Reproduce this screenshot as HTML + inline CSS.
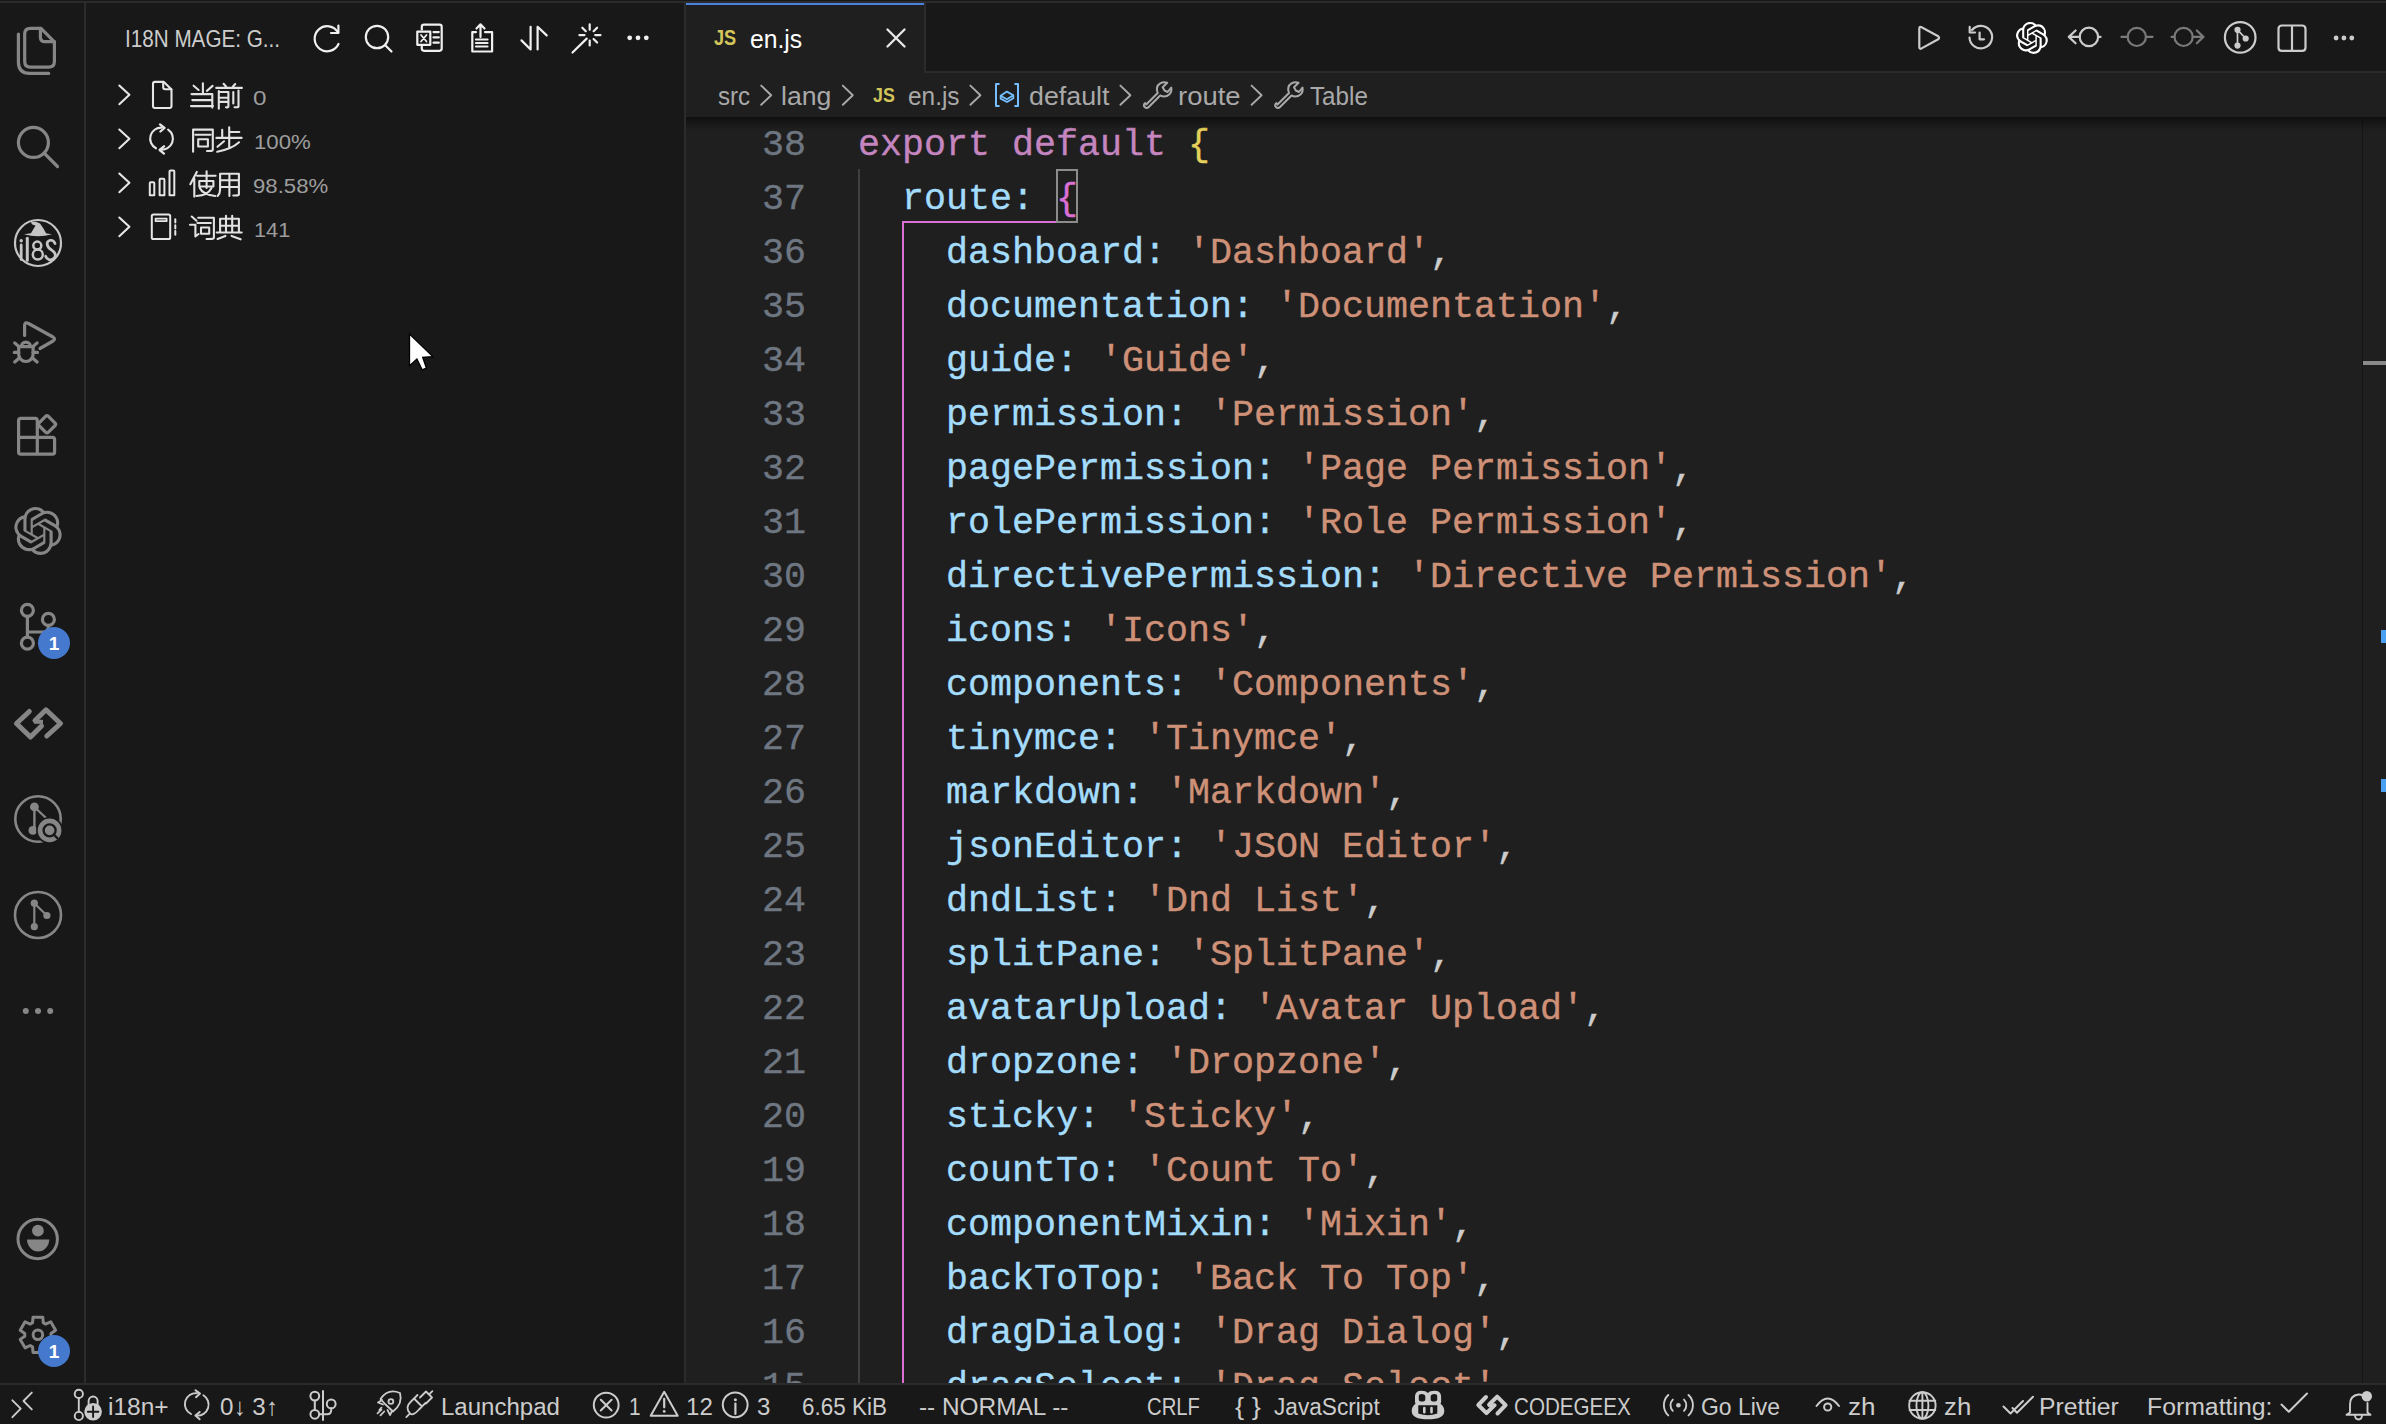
<!DOCTYPE html>
<html><head><meta charset="utf-8"><style>
*{margin:0;padding:0;box-sizing:border-box}
html,body{width:2386px;height:1424px;overflow:hidden;background:#181818;font-family:"Liberation Sans",sans-serif;color:#cccccc}
.a{position:absolute}
.t{position:absolute;line-height:0;white-space:pre;transform-origin:0 0;font-family:"Liberation Sans",sans-serif}
.code{position:absolute;font-family:"Liberation Mono",monospace;font-size:36.67px;line-height:54px;height:54px;white-space:pre;-webkit-text-stroke:0.35px currentColor}
.ln{left:0;width:120px;text-align:right;color:#6e7681}
.cl{left:172px;color:#cccccc}
.k{color:#a4dcfc}.s{color:#ce9178}.kw{color:#c586c0}.b1{color:#e4d05a}.b2{color:#da70d6}.p{color:#cccccc}
</style></head><body>

<div class="a" style="left:0;top:1px;width:2386px;height:2px;background:#2b2b2b"></div>
<div class="a" style="left:84px;top:3px;width:2px;height:1380px;background:#2b2b2b"></div>
<div class="a" style="left:684px;top:3px;width:2px;height:1380px;background:#2b2b2b"></div>
<div class="a" style="left:926px;top:71px;width:1460px;height:2px;background:#2b2b2b"></div>
<div class="a" style="left:686px;top:3px;width:238px;height:70px;background:#1f1f1f"></div>
<div class="a" style="left:686px;top:3px;width:238px;height:2px;background:#4a82de"></div>
<div class="a" style="left:924px;top:3px;width:2px;height:70px;background:#2b2b2b"></div>
<div class="a" style="left:686px;top:73px;width:1700px;height:44px;background:#1f1f1f"></div>

<div class="a" style="left:686px;top:117px;width:1676px;height:1266px;background:#1f1f1f;overflow:hidden">
<div class="a" style="left:172px;top:52px;width:2px;height:1300px;background:#404040"></div>
<div class="a" style="left:216px;top:104px;width:2px;height:1300px;background:#da70d6"></div>
<div class="a" style="left:216px;top:104px;width:154px;height:2px;background:#da70d6"></div>
<div class="a" style="left:370px;top:52px;width:22px;height:54px;border:2px solid #8c8c8c"></div>
<div class="code ln" style="top:1px">38</div>
<div class="code cl" style="top:1px"><span class="kw">export default </span><span class="b1">{</span></div>
<div class="code ln" style="top:55px">37</div>
<div class="code cl" style="top:55px"><span class="p">  </span><span class="k">route:</span><span class="p"> </span><span class="b2">{</span></div>
<div class="code ln" style="top:109px">36</div>
<div class="code cl" style="top:109px"><span class="p">    </span><span class="k">dashboard:</span><span class="p"> </span><span class="s">'Dashboard'</span><span class="p">,</span></div>
<div class="code ln" style="top:163px">35</div>
<div class="code cl" style="top:163px"><span class="p">    </span><span class="k">documentation:</span><span class="p"> </span><span class="s">'Documentation'</span><span class="p">,</span></div>
<div class="code ln" style="top:217px">34</div>
<div class="code cl" style="top:217px"><span class="p">    </span><span class="k">guide:</span><span class="p"> </span><span class="s">'Guide'</span><span class="p">,</span></div>
<div class="code ln" style="top:271px">33</div>
<div class="code cl" style="top:271px"><span class="p">    </span><span class="k">permission:</span><span class="p"> </span><span class="s">'Permission'</span><span class="p">,</span></div>
<div class="code ln" style="top:325px">32</div>
<div class="code cl" style="top:325px"><span class="p">    </span><span class="k">pagePermission:</span><span class="p"> </span><span class="s">'Page Permission'</span><span class="p">,</span></div>
<div class="code ln" style="top:379px">31</div>
<div class="code cl" style="top:379px"><span class="p">    </span><span class="k">rolePermission:</span><span class="p"> </span><span class="s">'Role Permission'</span><span class="p">,</span></div>
<div class="code ln" style="top:433px">30</div>
<div class="code cl" style="top:433px"><span class="p">    </span><span class="k">directivePermission:</span><span class="p"> </span><span class="s">'Directive Permission'</span><span class="p">,</span></div>
<div class="code ln" style="top:487px">29</div>
<div class="code cl" style="top:487px"><span class="p">    </span><span class="k">icons:</span><span class="p"> </span><span class="s">'Icons'</span><span class="p">,</span></div>
<div class="code ln" style="top:541px">28</div>
<div class="code cl" style="top:541px"><span class="p">    </span><span class="k">components:</span><span class="p"> </span><span class="s">'Components'</span><span class="p">,</span></div>
<div class="code ln" style="top:595px">27</div>
<div class="code cl" style="top:595px"><span class="p">    </span><span class="k">tinymce:</span><span class="p"> </span><span class="s">'Tinymce'</span><span class="p">,</span></div>
<div class="code ln" style="top:649px">26</div>
<div class="code cl" style="top:649px"><span class="p">    </span><span class="k">markdown:</span><span class="p"> </span><span class="s">'Markdown'</span><span class="p">,</span></div>
<div class="code ln" style="top:703px">25</div>
<div class="code cl" style="top:703px"><span class="p">    </span><span class="k">jsonEditor:</span><span class="p"> </span><span class="s">'JSON Editor'</span><span class="p">,</span></div>
<div class="code ln" style="top:757px">24</div>
<div class="code cl" style="top:757px"><span class="p">    </span><span class="k">dndList:</span><span class="p"> </span><span class="s">'Dnd List'</span><span class="p">,</span></div>
<div class="code ln" style="top:811px">23</div>
<div class="code cl" style="top:811px"><span class="p">    </span><span class="k">splitPane:</span><span class="p"> </span><span class="s">'SplitPane'</span><span class="p">,</span></div>
<div class="code ln" style="top:865px">22</div>
<div class="code cl" style="top:865px"><span class="p">    </span><span class="k">avatarUpload:</span><span class="p"> </span><span class="s">'Avatar Upload'</span><span class="p">,</span></div>
<div class="code ln" style="top:919px">21</div>
<div class="code cl" style="top:919px"><span class="p">    </span><span class="k">dropzone:</span><span class="p"> </span><span class="s">'Dropzone'</span><span class="p">,</span></div>
<div class="code ln" style="top:973px">20</div>
<div class="code cl" style="top:973px"><span class="p">    </span><span class="k">sticky:</span><span class="p"> </span><span class="s">'Sticky'</span><span class="p">,</span></div>
<div class="code ln" style="top:1027px">19</div>
<div class="code cl" style="top:1027px"><span class="p">    </span><span class="k">countTo:</span><span class="p"> </span><span class="s">'Count To'</span><span class="p">,</span></div>
<div class="code ln" style="top:1081px">18</div>
<div class="code cl" style="top:1081px"><span class="p">    </span><span class="k">componentMixin:</span><span class="p"> </span><span class="s">'Mixin'</span><span class="p">,</span></div>
<div class="code ln" style="top:1135px">17</div>
<div class="code cl" style="top:1135px"><span class="p">    </span><span class="k">backToTop:</span><span class="p"> </span><span class="s">'Back To Top'</span><span class="p">,</span></div>
<div class="code ln" style="top:1189px">16</div>
<div class="code cl" style="top:1189px"><span class="p">    </span><span class="k">dragDialog:</span><span class="p"> </span><span class="s">'Drag Dialog'</span><span class="p">,</span></div>
<div class="code ln" style="top:1243px">15</div>
<div class="code cl" style="top:1243px"><span class="p">    </span><span class="k">dragSelect:</span><span class="p"> </span><span class="s">'Drag Select'</span><span class="p">,</span></div>
</div>
<div class="a" style="left:2362px;top:117px;width:24px;height:1266px;background:#1f1f1f"></div>
<div class="a" style="left:2362px;top:117px;width:1px;height:1266px;background:#151515"></div>
<div class="a" style="left:2363px;top:361px;width:23px;height:4px;background:#8a8a8a"></div>
<div class="a" style="left:2381px;top:630px;width:5px;height:13px;background:#4aa0f0"></div>
<div class="a" style="left:2381px;top:779px;width:5px;height:13px;background:#4aa0f0"></div>
<div class="a" style="left:686px;top:117px;width:1700px;height:13px;background:linear-gradient(rgba(0,0,0,0.5),rgba(0,0,0,0))"></div>
<div class="a" style="left:0;top:1383px;width:2386px;height:41px;background:#181818;border-top:2px solid #2b2b2b"></div>
<div class="t" style="left:125.29px;top:38.79px;font-size:23.69px;color:#cccccc;transform:scaleX(0.8726);">I18N MAGE: G...</div>
<div class="t" style="left:253.05px;top:97.85px;font-size:20.05px;color:#9d9d9d;transform:scaleX(1.2103);">0</div>
<div class="t" style="left:253.71px;top:141.85px;font-size:20.05px;color:#9d9d9d;transform:scaleX(1.1093);">100%</div>
<div class="t" style="left:252.96px;top:185.75px;font-size:20.05px;color:#9d9d9d;transform:scaleX(1.1078);">98.58%</div>
<div class="t" style="left:253.74px;top:229.75px;font-size:20.35px;color:#9d9d9d;transform:scaleX(1.0698);">141</div>
<div class="t" style="left:714.47px;top:38.20px;font-size:21.95px;color:#d3c55a;transform:scaleX(0.8283);font-weight:bold;">JS</div>
<div class="t" style="left:749.65px;top:38.98px;font-size:25.17px;color:#ffffff;transform:scaleX(0.9825);">en.js</div>
<div class="t" style="left:718.13px;top:95.62px;font-size:26.50px;color:#a9a9a9;transform:scaleX(0.9089);">src</div>
<div class="t" style="left:781.40px;top:95.62px;font-size:26.50px;color:#a9a9a9;transform:scaleX(1.0063);">lang</div>
<div class="t" style="left:907.56px;top:95.62px;font-size:26.50px;color:#a9a9a9;transform:scaleX(0.9204);">en.js</div>
<div class="t" style="left:1028.67px;top:95.62px;font-size:26.50px;color:#a9a9a9;transform:scaleX(1.0121);">default</div>
<div class="t" style="left:1178.18px;top:95.62px;font-size:26.50px;color:#a9a9a9;transform:scaleX(1.0355);">route</div>
<div class="t" style="left:1309.86px;top:95.62px;font-size:26.50px;color:#a9a9a9;transform:scaleX(0.9130);">Table</div>
<div class="t" style="left:872.73px;top:94.75px;font-size:20.35px;color:#d3c55a;transform:scaleX(0.8744);font-weight:bold;">JS</div>
<div class="t" style="left:108.16px;top:1406.54px;font-size:24.42px;color:#cccccc;transform:scaleX(1.0037);">i18n+</div>
<div class="t" style="left:220.35px;top:1406.54px;font-size:24.42px;color:#cccccc;transform:scaleX(0.9914);">0↓ 3↑</div>
<div class="t" style="left:440.63px;top:1406.54px;font-size:24.42px;color:#cccccc;transform:scaleX(0.9840);">Launchpad</div>
<div class="t" style="left:628.91px;top:1406.54px;font-size:24.42px;color:#cccccc;transform:scaleX(0.8548);">1</div>
<div class="t" style="left:686.36px;top:1406.54px;font-size:24.42px;color:#cccccc;transform:scaleX(0.9886);">12</div>
<div class="t" style="left:757.48px;top:1406.54px;font-size:24.42px;color:#cccccc;transform:scaleX(0.9847);">3</div>
<div class="t" style="left:802.46px;top:1406.54px;font-size:24.42px;color:#cccccc;transform:scaleX(0.9200);">6.65 KiB</div>
<div class="t" style="left:919.32px;top:1406.54px;font-size:24.42px;color:#cccccc;transform:scaleX(0.9987);">-- NORMAL --</div>
<div class="t" style="left:1146.57px;top:1406.54px;font-size:24.42px;color:#cccccc;transform:scaleX(0.8302);">CRLF</div>
<div class="t" style="left:1234.55px;top:1406.54px;font-size:24.42px;color:#cccccc;transform:scaleX(1.1192);">{ }</div>
<div class="t" style="left:1274.25px;top:1406.54px;font-size:24.42px;color:#cccccc;transform:scaleX(0.9274);">JavaScript</div>
<div class="t" style="left:1514.35px;top:1406.54px;font-size:24.42px;color:#cccccc;transform:scaleX(0.8445);">CODEGEEX</div>
<div class="t" style="left:1700.95px;top:1406.54px;font-size:24.42px;color:#cccccc;transform:scaleX(0.9396);">Go Live</div>
<div class="t" style="left:1848.24px;top:1406.54px;font-size:24.42px;color:#cccccc;transform:scaleX(1.0683);">zh</div>
<div class="t" style="left:1943.76px;top:1406.54px;font-size:24.42px;color:#cccccc;transform:scaleX(1.0554);">zh</div>
<div class="t" style="left:2038.57px;top:1406.54px;font-size:24.42px;color:#cccccc;transform:scaleX(1.0144);">Prettier</div>
<div class="t" style="left:2147.46px;top:1406.54px;font-size:24.42px;color:#cccccc;transform:scaleX(1.0163);">Formatting:</div>
<svg class="a" style="left:0;top:0" width="2386" height="1424" viewBox="0 0 2386 1424"><path d="M30.4 28.4 H41 L54.4 41.8 V61.5 Q54.4 67.2 48.7 67.2 H30.4 Q24.7 67.2 24.7 61.5 V34.1 Q24.7 28.4 30.4 28.4 Z" fill="none" stroke="#868686" stroke-width="3.2" stroke-linecap="round" stroke-linejoin="round" />
<path d="M40.4 28.4 V37 Q40.4 41.7 45 41.7 H54.4" fill="none" stroke="#868686" stroke-width="3.2" stroke-linecap="round" stroke-linejoin="round" />
<path d="M18.4 34 V62 Q18.4 73.4 29.8 73.4 H48.7" fill="none" stroke="#868686" stroke-width="3.2" stroke-linecap="round" stroke-linejoin="round" />
<circle cx="33.4" cy="142.4" r="15" fill="none" stroke="#868686" stroke-width="3.2"/>
<path d="M44.2 153.2 L57.5 166.5" fill="none" stroke="#868686" stroke-width="3.2" stroke-linecap="round" stroke-linejoin="round" />
<circle cx="38" cy="243" r="23" fill="none" stroke="#c5c5c5" stroke-width="2.2"/>
<path d="M24 234.3 Q38 238.3 52 234.3 Q38 231.3 24 234.3 Z" fill="#c5c5c5" />
<path d="M30.5 234 Q33.5 229 35.5 225.5 Q31.5 225 31 222.3 Q35.5 220.5 40 223.5 Q43.5 228 46.5 234 Z" fill="#c5c5c5" />
<circle cx="21.2" cy="240.8" r="1.7" fill="#c5c5c5"/>
<path d="M21.2 245 V259.5" fill="none" stroke="#c5c5c5" stroke-width="2.8" stroke-linecap="round" stroke-linejoin="round" stroke-linecap="butt"/>
<path d="M27.3 238.3 V260.3" fill="none" stroke="#c5c5c5" stroke-width="3.0" stroke-linecap="round" stroke-linejoin="round" stroke-linecap="butt"/>
<circle cx="37.3" cy="245.6" r="4.0" fill="none" stroke="#c5c5c5" stroke-width="2.5"/>
<circle cx="37.8" cy="254.6" r="5.0" fill="none" stroke="#c5c5c5" stroke-width="2.5"/>
<path d="M55 243.5 Q53.5 239.8 50.2 240.3 Q46.5 241.2 47.3 245 Q48.3 248.3 52 250.3 Q56.3 253 55 257 Q53 260.7 48.8 259.6 Q46.3 258.7 45.6 256.2" fill="none" stroke="#c5c5c5" stroke-width="2.7" stroke-linecap="round" stroke-linejoin="round" />
<path d="M24.6 335.5 V325.5 Q24.6 321.5 28.5 323.5 L53 337 Q56 339 53 341 L40 348.5" fill="none" stroke="#868686" stroke-width="3.2" stroke-linecap="round" stroke-linejoin="round" />
<path d="M21.3 346.7 A4.6 4.6 0 0 1 30.5 346.7 M18.7 346.7 H33.1 V354.2 A7.2 7.3 0 0 1 18.7 354.2 Z" fill="none" stroke="#868686" stroke-width="3.2" stroke-linecap="round" stroke-linejoin="round" />
<path d="M14.7 342.9 L18.5 346.2 M14.3 352.4 H18.7 M14.7 362 L19 358.3 M37.1 342.9 L33.3 346.2 M37.5 352.4 H33.1 M37.1 362 L32.8 358.3" fill="none" stroke="#868686" stroke-width="3.2" stroke-linecap="round" stroke-linejoin="round" />
<path d="M18.6 420.6 Q18.6 418.4 20.8 418.4 H35.1 Q37.3 418.4 37.3 420.6 V437.3 H52.4 Q54.6 437.3 54.6 439.5 V451.9 Q54.6 454.1 52.4 454.1 H20.8 Q18.6 454.1 18.6 451.9 Z M18.6 437.3 H37.3 V454.1" fill="none" stroke="#868686" stroke-width="3.2" stroke-linecap="round" stroke-linejoin="round" />
<path d="M45.8 416.2 Q47 415 48.2 416.2 L55.1 423.1 Q56.3 424.3 55.1 425.5 L48.2 432.4 Q47 433.6 45.8 432.4 L38.9 425.5 Q37.7 424.3 38.9 423.1 Z" fill="none" stroke="#868686" stroke-width="3.2" stroke-linecap="round" stroke-linejoin="round" />
<g transform="translate(14,507) scale(2.0)"><path d="M22.2819 9.8211a5.9847 5.9847 0 0 0-.5157-4.9108 6.0462 6.0462 0 0 0-6.5098-2.9A6.0651 6.0651 0 0 0 4.9807 4.1818a5.9847 5.9847 0 0 0-3.9977 2.9 6.0462 6.0462 0 0 0 .7427 7.0966 5.98 5.98 0 0 0 .511 4.9107 6.051 6.051 0 0 0 6.5146 2.9001A5.9847 5.9847 0 0 0 13.2599 24a6.0557 6.0557 0 0 0 5.7718-4.2058 5.9894 5.9894 0 0 0 3.9977-2.9001 6.0557 6.0557 0 0 0-.7475-7.0729zm-9.022 12.6081a4.4755 4.4755 0 0 1-2.8764-1.0408l.1419-.0804 4.7783-2.7582a.7948.7948 0 0 0 .3927-.6813v-6.7369l2.02 1.1686a.071.071 0 0 1 .038.052v5.5826a4.504 4.504 0 0 1-4.4945 4.4944zm-9.6607-4.1254a4.4708 4.4708 0 0 1-.5346-3.0137l.142.0852 4.783 2.7582a.7712.7712 0 0 0 .7806 0l5.8428-3.3685v2.3324a.0804.0804 0 0 1-.0332.0615L9.74 19.9502a4.4992 4.4992 0 0 1-6.1408-1.6464zM2.3408 7.8956a4.485 4.485 0 0 1 2.3655-1.9728V11.6a.7664.7664 0 0 0 .3879.6765l5.8144 3.3543-2.0201 1.1685a.0757.0757 0 0 1-.071 0l-4.8303-2.7865A4.504 4.504 0 0 1 2.3408 7.872zm16.5963 3.8558L13.1038 8.364 15.1192 7.2a.0757.0757 0 0 1 .071 0l4.8303 2.7913a4.4944 4.4944 0 0 1-.6765 8.1042v-5.6772a.79.79 0 0 0-.407-.667zm2.0107-3.0231l-.142-.0852-4.7735-2.7818a.7759.7759 0 0 0-.7854 0L9.409 9.2297V6.8974a.0662.0662 0 0 1 .0284-.0615l4.8303-2.7866a4.4992 4.4992 0 0 1 6.6802 4.66zM8.3065 12.863l-2.02-1.1638a.0804.0804 0 0 1-.038-.0567V6.0742a4.4992 4.4992 0 0 1 7.3757-3.4537l-.142.0805L8.704 5.459a.7948.7948 0 0 0-.3927.6813zm1.0976-2.3654l2.602-1.4998 2.6069 1.4998v2.9994l-2.5974 1.4997-2.6067-1.4997Z" fill="#868686"/></g>
<circle cx="27.4" cy="610.3" r="6" fill="none" stroke="#868686" stroke-width="3.2"/>
<circle cx="27.4" cy="643.2" r="6" fill="none" stroke="#868686" stroke-width="3.2"/>
<circle cx="48.4" cy="619.4" r="6" fill="none" stroke="#868686" stroke-width="3.2"/>
<path d="M27.4 616.3 V637.2 M48.4 625.4 V626.5 Q48.4 632 42.9 632 H27.4" fill="none" stroke="#868686" stroke-width="3.2" stroke-linecap="round" stroke-linejoin="round" />
<circle cx="54" cy="643" r="16" fill="#4579cd"/>
<text x="54" y="650" font-family="Liberation Sans" font-weight="bold" font-size="19" fill="#ffffff" text-anchor="middle">1</text>
<path d="M29.3 711.5 L16.5 723.5 L30.5 737 L41.5 726" fill="none" stroke="#868686" stroke-width="5" stroke-linecap="round" stroke-linejoin="round" stroke-linejoin="miter"/>
<path d="M46.8 736 L60.5 723.5 L46 709.8 L35 720.5" fill="none" stroke="#868686" stroke-width="5" stroke-linecap="round" stroke-linejoin="round" stroke-linejoin="miter"/>
<path d="M34 719.8 H43 V723.8 H34 Z" fill="#868686" />
<circle cx="38" cy="819" r="22.7" fill="none" stroke="#868686" stroke-width="2.6"/>
<circle cx="34.4" cy="806.9" r="4.4" fill="#868686"/>
<circle cx="32.9" cy="830.4" r="4.4" fill="#868686"/>
<path d="M34.4 807 V830 M34.4 807 L45.5 817.5" fill="none" stroke="#868686" stroke-width="2.4" stroke-linecap="round" stroke-linejoin="round" />
<circle cx="49.6" cy="830.4" r="13.5" fill="#181818"/>
<circle cx="49.6" cy="830.4" r="11.8" fill="#868686"/>
<circle cx="49.6" cy="830.4" r="6.0" fill="none" stroke="#181818" stroke-width="2.3"/>
<path d="M53.8 834.6 L57.3 838.1" fill="none" stroke="#181818" stroke-width="2.3" stroke-linecap="round" stroke-linejoin="round" />
<circle cx="38" cy="915" r="23" fill="none" stroke="#868686" stroke-width="2.6"/>
<circle cx="34.3" cy="903.2" r="3.6" fill="#868686"/>
<circle cx="46.9" cy="915.5" r="3.6" fill="#868686"/>
<circle cx="34.3" cy="926.7" r="3.6" fill="#868686"/>
<path d="M34.3 903.2 V926.7 M34.3 903.2 L46.9 915.5" fill="none" stroke="#868686" stroke-width="2.2" stroke-linecap="round" stroke-linejoin="round" />
<circle cx="25.8" cy="1011" r="3" fill="#868686"/>
<circle cx="38" cy="1011" r="3" fill="#868686"/>
<circle cx="50.2" cy="1011" r="3" fill="#868686"/>
<circle cx="37.7" cy="1239" r="19.7" fill="none" stroke="#868686" stroke-width="3"/>
<circle cx="37.9" cy="1230.7" r="5.9" fill="#868686"/>
<path d="M27.1 1239.6 H49.2 A11.05 12 0 0 1 27.1 1239.6 Z" fill="#868686" />
<path d="M32.52 1322.75 L33.02 1317.16 L42.78 1317.16 L43.28 1322.75 L45.65 1324.11 L50.73 1321.75 L55.61 1330.21 L51.03 1333.43 L51.03 1336.17 L55.61 1339.39 L50.73 1347.85 L45.65 1345.49 L43.28 1346.85 L42.78 1352.44 L33.02 1352.44 L32.52 1346.85 L30.15 1345.49 L25.07 1347.85 L20.19 1339.39 L24.77 1336.17 L24.77 1333.43 L20.19 1330.21 L25.07 1321.75 L30.15 1324.11 Z" fill="none" stroke="#868686" stroke-width="3" stroke-linecap="round" stroke-linejoin="round" />
<circle cx="37.9" cy="1334.8" r="4.8" fill="none" stroke="#868686" stroke-width="3"/>
<circle cx="54" cy="1351" r="16" fill="#4579cd"/>
<text x="54" y="1358" font-family="Liberation Sans" font-weight="bold" font-size="19" fill="#ffffff" text-anchor="middle">1</text><path d="M338 32.5 A12.5 12.5 0 1 0 338.5 44" fill="none" stroke="#f0f0f0" stroke-width="2.2" stroke-linecap="round" stroke-linejoin="round" />
<path d="M338.4 25.5 V33 H331" fill="none" stroke="#f0f0f0" stroke-width="2.2" stroke-linecap="round" stroke-linejoin="round" />
<circle cx="377" cy="37" r="11.2" fill="none" stroke="#f0f0f0" stroke-width="2.2"/>
<path d="M385 45 L391.5 51.5" fill="none" stroke="#f0f0f0" stroke-width="2.2" stroke-linecap="round" stroke-linejoin="round" />
<path d="M424 24.6 H439.5 Q441.7 24.6 441.7 26.8 V48.6 Q441.7 50.8 439.5 50.8 H424 Q421.8 50.8 421.8 48.6 V26.8 Q421.8 24.6 424 24.6 Z" fill="none" stroke="#f0f0f0" stroke-width="2.2" stroke-linecap="round" stroke-linejoin="round" />
<path d="M416 30.4 H431.5 V46 H416 Z" fill="#181818" />
<path d="M417.3 31.6 H430.3 V44.8 H417.3 Z" fill="none" stroke="#f0f0f0" stroke-width="2.2" stroke-linecap="round" stroke-linejoin="round" />
<path d="M421 35 L426.5 41.5 M426.5 35 L421 41.5" fill="none" stroke="#f0f0f0" stroke-width="1.8" stroke-linecap="round" stroke-linejoin="round" />
<path d="M433.5 32.1 H438.8 M433.5 37.4 H438.8 M433.5 42.7 H438.8" fill="none" stroke="#f0f0f0" stroke-width="2.2" stroke-linecap="round" stroke-linejoin="round" />
<path d="M476 32.1 H472.3 V51.5 H492.1 V32.1 H485" fill="none" stroke="#f0f0f0" stroke-width="2.2" stroke-linecap="round" stroke-linejoin="round" />
<path d="M480.5 37 V24.5 M476.5 28.5 L480.5 24.3 L484.5 28.5" fill="none" stroke="#f0f0f0" stroke-width="2.2" stroke-linecap="round" stroke-linejoin="round" />
<path d="M476 39.5 H487.5 M476 43 H487.5 M476 46.5 H487.5" fill="none" stroke="#f0f0f0" stroke-width="2.2" stroke-linecap="round" stroke-linejoin="round" />
<path d="M530.6 26.8 V49.5 L521.5 40.4" fill="none" stroke="#f0f0f0" stroke-width="2.2" stroke-linecap="round" stroke-linejoin="round" />
<path d="M537.6 49.5 V26.8 L546.7 35.4" fill="none" stroke="#f0f0f0" stroke-width="2.2" stroke-linecap="round" stroke-linejoin="round" />
<path d="M572.5 52.5 L586.7 38.6" fill="none" stroke="#f0f0f0" stroke-width="2.2" stroke-linecap="round" stroke-linejoin="round" />
<path d="M589.7 24.3 V29.7 M589.7 40.5 V45.5 M579.4 35.1 H584.5 M595.2 35.1 H600.5 M582.3 27.7 L585.8 31.2 M597.1 27.7 L593.6 31.2 M597.1 42.5 L593.6 39" fill="none" stroke="#f0f0f0" stroke-width="2.2" stroke-linecap="round" stroke-linejoin="round" />
<circle cx="629.7" cy="37.8" r="2.4" fill="#f0f0f0"/>
<circle cx="638" cy="37.8" r="2.4" fill="#f0f0f0"/>
<circle cx="646.3" cy="37.8" r="2.4" fill="#f0f0f0"/>
<path d="M119.3 85.55 L129.4 94.85 L119.3 104.14999999999999" fill="none" stroke="#e6e6e6" stroke-width="2.1" stroke-linecap="round" stroke-linejoin="round" />
<path d="M119.3 129.54999999999998 L129.4 138.85 L119.3 148.15" fill="none" stroke="#e6e6e6" stroke-width="2.1" stroke-linecap="round" stroke-linejoin="round" />
<path d="M119.3 173.54999999999998 L129.4 182.85 L119.3 192.15" fill="none" stroke="#e6e6e6" stroke-width="2.1" stroke-linecap="round" stroke-linejoin="round" />
<path d="M119.3 217.54999999999998 L129.4 226.85 L119.3 236.15" fill="none" stroke="#e6e6e6" stroke-width="2.1" stroke-linecap="round" stroke-linejoin="round" />
<path d="M155 81.9 H163.9 L171.5 89.5 V106 Q171.5 108 169.5 108 H155 Q153 108 153 106 V83.9 Q153 81.9 155 81.9 Z" fill="none" stroke="#e6e6e6" stroke-width="2.1" stroke-linecap="round" stroke-linejoin="round" />
<path d="M163.2 82 V87.2 Q163.2 89.2 165.2 89.2 H171.3" fill="none" stroke="#e6e6e6" stroke-width="2.1" stroke-linecap="round" stroke-linejoin="round" />
<path d="M161.5 127.6 A11 11 0 0 0 156 148.3" fill="none" stroke="#e6e6e6" stroke-width="2.1" stroke-linecap="round" stroke-linejoin="round" />
<path d="M168.1 129.6 A11 11 0 0 1 160.5 149.6" fill="none" stroke="#e6e6e6" stroke-width="2.1" stroke-linecap="round" stroke-linejoin="round" />
<path d="M160 124.4 L164.5 128 L160.4 131.5" fill="none" stroke="#e6e6e6" stroke-width="2.3" stroke-linecap="round" stroke-linejoin="round" />
<path d="M164 146.3 L159.6 150 L164 153.6" fill="none" stroke="#e6e6e6" stroke-width="2.3" stroke-linecap="round" stroke-linejoin="round" />
<path d="M150.8 182.3 H153.3 Q154.3 182.3 154.3 183.3 V195.2 H149.8 V183.3 Q149.8 182.3 150.8 182.3 Z" fill="none" stroke="#e6e6e6" stroke-width="2.0" stroke-linecap="round" stroke-linejoin="round" />
<path d="M160.6 178.7 H163.4 Q164.4 178.7 164.4 179.7 V195.2 H159.6 V179.7 Q159.6 178.7 160.6 178.7 Z" fill="none" stroke="#e6e6e6" stroke-width="2.0" stroke-linecap="round" stroke-linejoin="round" />
<path d="M170.5 170.4 H173.3 Q174.3 170.4 174.3 171.4 V195.2 H169.5 V171.4 Q169.5 170.4 170.5 170.4 Z" fill="none" stroke="#e6e6e6" stroke-width="2.0" stroke-linecap="round" stroke-linejoin="round" />
<path d="M153.5 214.6 H168.5 Q170.2 214.6 170.2 216.3 V237.4 Q170.2 239.1 168.5 239.1 H153.5 Q151.8 239.1 151.8 237.4 V216.3 Q151.8 214.6 153.5 214.6 Z" fill="none" stroke="#e6e6e6" stroke-width="2.0" stroke-linecap="round" stroke-linejoin="round" />
<path d="M155.6 218.6 H166.6 V221.2 H155.6 Z" fill="none" stroke="#e6e6e6" stroke-width="1.8" stroke-linecap="round" stroke-linejoin="round" />
<path d="M175.3 219.3 V222.4 M175.3 225.2 V228.6 M175.3 231 V234.7" fill="none" stroke="#e6e6e6" stroke-width="2.0" stroke-linecap="round" stroke-linejoin="round" stroke-linecap="butt"/>
<path d="M202.9 83.2 V93 M193.6 85.7 L198.6 90 M212.6 85.9 L206.9 90.9 M191.5 94.1 H212.3 V107.6 M192.3 100.1 H212.3 M191 106.1 H213" fill="none" stroke="#e2e2e2" stroke-width="2.1" stroke-linecap="round" stroke-linejoin="round" stroke-linecap="butt" stroke-linejoin="miter"/>
<path d="M223.6 83.8 L226.4 87 M235.2 84 L232.8 86.8 M216.2 87.9 H241.9 M218.8 91 V108.7 M218.8 92 H228.4 V106.6 Q228.4 107.6 226 107.3 M218.8 97.7 H228.4 M218.8 101.9 H228.4 M233.3 92 V103.5 M238.5 90.5 V106.5 Q238.5 107.6 234.5 107.2" fill="none" stroke="#e2e2e2" stroke-width="2.1" stroke-linecap="round" stroke-linejoin="round" stroke-linecap="butt" stroke-linejoin="miter"/>
<path d="M193.1 151.7 V129.6 H212.8 V150 Q212.8 151.2 207 151 M195.4 134.8 H210.5 M198.2 139.2 H207.9 V146.5 H198.2 Z" fill="none" stroke="#e2e2e2" stroke-width="2.1" stroke-linecap="round" stroke-linejoin="round" stroke-linecap="butt" stroke-linejoin="miter"/>
<path d="M229.2 127.3 V147 M222.2 129.8 V137.7 M229.2 132 H239.3 M216.4 137.9 H241.6 M224 141.3 L217.5 146.8 M239 142.3 Q232 149 217.2 151.7" fill="none" stroke="#e2e2e2" stroke-width="2.1" stroke-linecap="round" stroke-linejoin="round" stroke-linecap="butt" stroke-linejoin="miter"/>
<path d="M196.8 171.9 L190.3 184.2 M194.3 178.5 V196.6 M197.1 175.8 H215.6 M206.6 171.3 V188 M199.3 181 H213.4 V186.5 H199.3 Z M199.6 187.8 Q203 195 215.3 196 M211.4 188.2 Q208 195 196.5 196" fill="none" stroke="#e2e2e2" stroke-width="2.1" stroke-linecap="round" stroke-linejoin="round" stroke-linecap="butt" stroke-linejoin="miter"/>
<path d="M220.1 173.8 V189.5 Q220.1 193.5 217.6 196 M220.1 173.8 H238.9 V194.5 Q238.9 195.8 233.3 195.5 M229.4 173.8 V196 M220.1 180.3 H238.9 M220.1 187 H238.9" fill="none" stroke="#e2e2e2" stroke-width="2.1" stroke-linecap="round" stroke-linejoin="round" stroke-linecap="butt" stroke-linejoin="miter"/>
<path d="M191.7 216.5 L196.5 220.7 M190 224.7 H195.4 V236.5 L198.5 234 M198.2 217.7 H213.9 V238 Q213.9 239.3 206.6 239 M197.4 223 H210.8 M201 227.5 H209.2 V233.7 H201 Z" fill="none" stroke="#e2e2e2" stroke-width="2.1" stroke-linecap="round" stroke-linejoin="round" stroke-linecap="butt" stroke-linejoin="miter"/>
<path d="M226 215.7 V232.5 M232.2 215.7 V232.5 M220.1 232.5 V218.8 H238.9 V232.5 M220.1 225.8 H238.9 M216.7 232.5 H241.7 M225.4 235.9 L217.6 239 M231.6 235.9 L240.6 239.3" fill="none" stroke="#e2e2e2" stroke-width="2.1" stroke-linecap="round" stroke-linejoin="round" stroke-linecap="butt" stroke-linejoin="miter"/>
<path d="M409.5 334 L409.5 365.8 L416.9 359 L422.2 369.9 L426.4 368 L422.7 357.3 L432.8 356.6 Z" fill="#ffffff" stroke="#000000" stroke-width="1.3" stroke-linejoin="miter"/><path d="M887.5 29.5 L904.5 46.5 M904.5 29.5 L887.5 46.5" fill="none" stroke="#e8e8e8" stroke-width="2.3" stroke-linecap="round" stroke-linejoin="round" />
<path d="M761.1999999999999 85.6 L771.1999999999999 95.2 L761.1999999999999 104.8" fill="none" stroke="#a9a9a9" stroke-width="1.9" stroke-linecap="round" stroke-linejoin="round" />
<path d="M842.8 85.6 L852.8 95.2 L842.8 104.8" fill="none" stroke="#a9a9a9" stroke-width="1.9" stroke-linecap="round" stroke-linejoin="round" />
<path d="M970.4 85.6 L980.4 95.2 L970.4 104.8" fill="none" stroke="#a9a9a9" stroke-width="1.9" stroke-linecap="round" stroke-linejoin="round" />
<path d="M1120.3999999999999 85.6 L1130.3999999999999 95.2 L1120.3999999999999 104.8" fill="none" stroke="#a9a9a9" stroke-width="1.9" stroke-linecap="round" stroke-linejoin="round" />
<path d="M1251.6 85.6 L1261.6 95.2 L1251.6 104.8" fill="none" stroke="#a9a9a9" stroke-width="1.9" stroke-linecap="round" stroke-linejoin="round" />
<path d="M998.8 84 H996 V106 H998.8 M1015.2 84 H1018 V106 H1015.2" fill="none" stroke="#75beff" stroke-width="2.0" stroke-linecap="round" stroke-linejoin="round" />
<path d="M1000.6 95.8 L1006.9 91.6 L1013.3 95.3 V98.2 L1007 102 L1000.6 98.6 Z M1000.6 95.8 L1006.9 99.3 L1013.3 95.3" fill="none" stroke="#75beff" stroke-width="1.8" stroke-linecap="round" stroke-linejoin="round" />
<path d="M1146.2 104.5 L1157.7 93 M1157.7 93 Q1155.2 86.5 1160.2 83.3 Q1163.7 81.5 1167.2 82.8 L1162.7 87.3 L1164.5 90.5 L1167.7 92 L1171.2 87.5 Q1172.2 91.5 1169.2 94.5 Q1165.2 98 1160.2 95.5 L1148.7 107 Q1146.7 109 1144.7 107 Q1142.7 105 1145.2 103" fill="none" stroke="#a9a9a9" stroke-width="2.0" stroke-linecap="round" stroke-linejoin="round" />
<path d="M1277.5 104.5 L1289 93 M1289 93 Q1286.5 86.5 1291.5 83.3 Q1295 81.5 1298.5 82.8 L1294 87.3 L1295.8 90.5 L1299 92 L1302.5 87.5 Q1303.5 91.5 1300.5 94.5 Q1296.5 98 1291.5 95.5 L1280 107 Q1278 109 1276 107 Q1274 105 1276.5 103" fill="none" stroke="#a9a9a9" stroke-width="2.0" stroke-linecap="round" stroke-linejoin="round" />
<path d="M1919.3 28.5 Q1919.3 26 1921.6 27.2 L1938.2 36.2 Q1940 37.8 1938.2 39.3 L1921.6 48.4 Q1919.3 49.6 1919.3 47 Z" fill="none" stroke="#cccccc" stroke-width="2.2" stroke-linecap="round" stroke-linejoin="round" />
<path d="M1969.5 37.5 A11.3 11.3 0 1 0 1972 30" fill="none" stroke="#cccccc" stroke-width="2.2" stroke-linecap="round" stroke-linejoin="round" />
<path d="M1969.7 26.8 V32.5 H1975" fill="none" stroke="#cccccc" stroke-width="2.2" stroke-linecap="round" stroke-linejoin="round" />
<path d="M1979.6 32.5 V39.3 H1984" fill="none" stroke="#cccccc" stroke-width="2.2" stroke-linecap="round" stroke-linejoin="round" />
<g transform="translate(2015.9,21.9) scale(1.3333333333333333)"><path d="M22.2819 9.8211a5.9847 5.9847 0 0 0-.5157-4.9108 6.0462 6.0462 0 0 0-6.5098-2.9A6.0651 6.0651 0 0 0 4.9807 4.1818a5.9847 5.9847 0 0 0-3.9977 2.9 6.0462 6.0462 0 0 0 .7427 7.0966 5.98 5.98 0 0 0 .511 4.9107 6.051 6.051 0 0 0 6.5146 2.9001A5.9847 5.9847 0 0 0 13.2599 24a6.0557 6.0557 0 0 0 5.7718-4.2058 5.9894 5.9894 0 0 0 3.9977-2.9001 6.0557 6.0557 0 0 0-.7475-7.0729zm-9.022 12.6081a4.4755 4.4755 0 0 1-2.8764-1.0408l.1419-.0804 4.7783-2.7582a.7948.7948 0 0 0 .3927-.6813v-6.7369l2.02 1.1686a.071.071 0 0 1 .038.052v5.5826a4.504 4.504 0 0 1-4.4945 4.4944zm-9.6607-4.1254a4.4708 4.4708 0 0 1-.5346-3.0137l.142.0852 4.783 2.7582a.7712.7712 0 0 0 .7806 0l5.8428-3.3685v2.3324a.0804.0804 0 0 1-.0332.0615L9.74 19.9502a4.4992 4.4992 0 0 1-6.1408-1.6464zM2.3408 7.8956a4.485 4.485 0 0 1 2.3655-1.9728V11.6a.7664.7664 0 0 0 .3879.6765l5.8144 3.3543-2.0201 1.1685a.0757.0757 0 0 1-.071 0l-4.8303-2.7865A4.504 4.504 0 0 1 2.3408 7.872zm16.5963 3.8558L13.1038 8.364 15.1192 7.2a.0757.0757 0 0 1 .071 0l4.8303 2.7913a4.4944 4.4944 0 0 1-.6765 8.1042v-5.6772a.79.79 0 0 0-.407-.667zm2.0107-3.0231l-.142-.0852-4.7735-2.7818a.7759.7759 0 0 0-.7854 0L9.409 9.2297V6.8974a.0662.0662 0 0 1 .0284-.0615l4.8303-2.7866a4.4992 4.4992 0 0 1 6.6802 4.66zM8.3065 12.863l-2.02-1.1638a.0804.0804 0 0 1-.038-.0567V6.0742a4.4992 4.4992 0 0 1 7.3757-3.4537l-.142.0805L8.704 5.459a.7948.7948 0 0 0-.3927.6813zm1.0976-2.3654l2.602-1.4998 2.6069 1.4998v2.9994l-2.5974 1.4997-2.6067-1.4997Z" fill="#ffffff"/></g>
<path d="M2075.6 30.5 L2068.8 36.9 L2075.6 43.3 M2069 36.9 H2079.5" fill="none" stroke="#cccccc" stroke-width="2.2" stroke-linecap="round" stroke-linejoin="round" />
<circle cx="2088.9" cy="36.9" r="9.2" fill="none" stroke="#cccccc" stroke-width="2.2"/>
<path d="M2098.2 36.9 H2100.5" fill="none" stroke="#cccccc" stroke-width="2.2" stroke-linecap="round" stroke-linejoin="round" />
<circle cx="2136.8" cy="36.9" r="9.1" fill="none" stroke="#7a7a7a" stroke-width="2.2"/>
<path d="M2121.5 36.9 H2127.6 M2146 36.9 H2152.5" fill="none" stroke="#7a7a7a" stroke-width="2.2" stroke-linecap="round" stroke-linejoin="round" stroke-linecap="butt"/>
<circle cx="2183.6" cy="36.9" r="9.1" fill="none" stroke="#7a7a7a" stroke-width="2.2"/>
<path d="M2171.6 36.9 H2174.4 M2192.7 36.9 H2203.5 M2196.8 30.5 L2203.4 36.9 L2196.8 43.3" fill="none" stroke="#7a7a7a" stroke-width="2.2" stroke-linecap="round" stroke-linejoin="round" />
<circle cx="2240.2" cy="37.4" r="15.3" fill="none" stroke="#cccccc" stroke-width="2.2"/>
<circle cx="2237.5" cy="29.8" r="3.1" fill="#cccccc"/>
<circle cx="2245.7" cy="38.5" r="3.1" fill="#cccccc"/>
<circle cx="2237.5" cy="45.6" r="3.1" fill="#cccccc"/>
<path d="M2237.5 29.8 V45.6 M2237.5 29.8 L2245.7 38.5" fill="none" stroke="#cccccc" stroke-width="1.7" stroke-linecap="round" stroke-linejoin="round" />
<path d="M2282 25.5 H2302 Q2305.5 25.5 2305.5 29 V47.4 Q2305.5 50.8 2302 50.8 H2282 Q2278.5 50.8 2278.5 47.4 V29 Q2278.5 25.5 2282 25.5 Z M2292 25.5 V50.8" fill="none" stroke="#cccccc" stroke-width="2.2" stroke-linecap="round" stroke-linejoin="round" />
<circle cx="2336.1" cy="38" r="2.4" fill="#cccccc"/>
<circle cx="2343.9" cy="38" r="2.4" fill="#cccccc"/>
<circle cx="2351.8" cy="38" r="2.4" fill="#cccccc"/><path d="M12.4 1400.3 L20.7 1408.7 L12.4 1417.2 M31.8 1392.6 L23.5 1401 L31.8 1409.4" fill="none" stroke="#cccccc" stroke-width="1.9" stroke-linecap="round" stroke-linejoin="round" stroke-linecap="butt"/>
<circle cx="78.8" cy="1393.9" r="4.1" fill="none" stroke="#cccccc" stroke-width="1.9"/>
<circle cx="78.8" cy="1416" r="4.1" fill="none" stroke="#cccccc" stroke-width="1.9"/>
<path d="M78.8 1398 V1411.8" fill="none" stroke="#cccccc" stroke-width="1.9" stroke-linecap="round" stroke-linejoin="round" />
<path d="M88.6 1405 V1401 A4.5 4.5 0 0 1 97.6 1401 V1405" fill="none" stroke="#cccccc" stroke-width="1.9" stroke-linecap="round" stroke-linejoin="round" />
<circle cx="93.1" cy="1411.8" r="8.8" fill="#cccccc"/>
<path d="M93.1 1406.5 V1417 M87.8 1411.8 H98.4" fill="none" stroke="#181818" stroke-width="1.9" stroke-linecap="round" stroke-linejoin="round" stroke-linecap="butt"/>
<path d="M197 1393.2 A11 11 0 0 0 191 1414" fill="none" stroke="#cccccc" stroke-width="1.9" stroke-linecap="round" stroke-linejoin="round" />
<path d="M203.4 1395.3 A11 11 0 0 1 196.6 1415.6" fill="none" stroke="#cccccc" stroke-width="1.9" stroke-linecap="round" stroke-linejoin="round" />
<path d="M195.5 1390.2 L200 1393.6 L196 1397.2" fill="none" stroke="#cccccc" stroke-width="2.0" stroke-linecap="round" stroke-linejoin="round" />
<path d="M199.7 1412 L195.4 1415.6 L199.7 1419.2" fill="none" stroke="#cccccc" stroke-width="2.0" stroke-linecap="round" stroke-linejoin="round" />
<circle cx="314.8" cy="1396.1" r="4.4" fill="none" stroke="#cccccc" stroke-width="2.0"/>
<circle cx="314.8" cy="1414.3" r="4.4" fill="none" stroke="#cccccc" stroke-width="2.0"/>
<circle cx="331.2" cy="1403.9" r="4.4" fill="none" stroke="#cccccc" stroke-width="2.0"/>
<path d="M314.8 1400.5 V1409.9 M323 1391 V1420 M331.2 1408.3 V1410 Q331.2 1414.3 327 1414.3 H319.2" fill="none" stroke="#cccccc" stroke-width="2.0" stroke-linecap="round" stroke-linejoin="round" stroke-linecap="butt"/>
<path d="M380.5 1399 Q388 1388 400 1393 Q403 1404 393 1411.5 L385 1404 Z" fill="none" stroke="#cccccc" stroke-width="1.8" stroke-linecap="round" stroke-linejoin="round" />
<circle cx="390.9" cy="1401.5" r="2.4" fill="none" stroke="#cccccc" stroke-width="1.8"/>
<path d="M382 1400 L378 1402.5 L383 1404.5 M392 1411 L390 1415 L387.5 1410 M379.3 1410 L381.5 1407.6 M377.5 1413.3 L381.5 1409.6 M380.5 1415.4 L384.2 1411.5" fill="none" stroke="#cccccc" stroke-width="1.8" stroke-linecap="round" stroke-linejoin="round" />
<path d="M406.3 1417.1 L410 1413.3 M410 1413.3 Q404.5 1407.5 411 1401.5 L414 1398.5 L422 1406.5 L419 1409.5 Q413 1416.5 410 1413.3 M412.2 1400.3 L417.5 1395 M420.3 1408.2 L425.5 1403 M420 1397.5 L426 1391.5 L432 1397.5 L426 1403.5 M429 1394.5 L432.4 1391.2" fill="none" stroke="#cccccc" stroke-width="1.8" stroke-linecap="round" stroke-linejoin="round" />
<circle cx="606.2" cy="1405.1" r="12.4" fill="none" stroke="#cccccc" stroke-width="2.0"/>
<path d="M600.8 1399.7 L611.6 1410.5 M611.6 1399.7 L600.8 1410.5" fill="none" stroke="#cccccc" stroke-width="2.0" stroke-linecap="round" stroke-linejoin="round" />
<path d="M664.2 1391.8 L677.7 1415.8 H650.7 Z" fill="none" stroke="#cccccc" stroke-width="2.0" stroke-linecap="round" stroke-linejoin="round" />
<path d="M664.2 1398.8 V1407.3" fill="none" stroke="#cccccc" stroke-width="2.2" stroke-linecap="round" stroke-linejoin="round" />
<circle cx="664.2" cy="1411.4" r="1.4" fill="#cccccc"/>
<circle cx="735.2" cy="1404.8" r="12.4" fill="none" stroke="#cccccc" stroke-width="2.0"/>
<circle cx="735.4" cy="1399.7" r="1.5" fill="#cccccc"/>
<path d="M735.4 1403.6 V1414" fill="none" stroke="#cccccc" stroke-width="2.2" stroke-linecap="round" stroke-linejoin="round" />
<path d="M1415 1396.5 Q1415 1390.8 1421.5 1390.8 Q1426 1390.8 1427.9 1393 Q1429.8 1390.8 1434.5 1390.8 Q1441.1 1390.8 1441.1 1396.5 V1401.5 Q1441.1 1403 1440.5 1403.8 Q1444.3 1406.5 1444.3 1411 Q1444.3 1419.3 1428 1419.3 Q1411.7 1419.3 1411.7 1411 Q1411.7 1406.5 1415.5 1403.8 Q1415 1403 1415 1401.5 Z" fill="#cccccc" />
<path d="M1418.8 1395.5 Q1418.8 1393.9 1421.5 1393.9 Q1425.3 1393.9 1425.3 1396.5 V1399.5 Q1425.3 1401.6 1422 1401.6 Q1418.8 1401.6 1418.8 1399.5 Z M1430.7 1396.5 Q1430.7 1393.9 1434.5 1393.9 Q1437.2 1393.9 1437.2 1395.5 V1399.5 Q1437.2 1401.6 1434 1401.6 Q1430.7 1401.6 1430.7 1399.5 Z M1418.3 1405.3 H1437.3 V1413.5 Q1428 1417 1418.3 1413.5 Z" fill="#181818" />
<path d="M1424.3 1408 V1412.2 M1431.5 1408 V1412.2" fill="none" stroke="#cccccc" stroke-width="2.6" stroke-linecap="round" stroke-linejoin="round" />
<path d="M1486 1397 L1478.3 1405 L1486.5 1413.2 L1494.6 1405.2 H1489.5" fill="none" stroke="#cccccc" stroke-width="4.0" stroke-linecap="round" stroke-linejoin="round" stroke-linecap="butt" stroke-linejoin="miter"/>
<path d="M1497.5 1413.5 L1505.6 1405.2 L1497.2 1396.6 L1489.2 1404.5" fill="none" stroke="#cccccc" stroke-width="4.0" stroke-linecap="round" stroke-linejoin="round" stroke-linecap="butt" stroke-linejoin="miter"/>
<circle cx="1678.4" cy="1405.2" r="2.3" fill="#cccccc"/>
<path d="M1672.8 1399.6 A8 8 0 0 0 1672.8 1410.8 M1684 1399.6 A8 8 0 0 1 1684 1410.8 M1668.3 1395 A14 14 0 0 0 1668.3 1415.4 M1688.5 1395 A14 14 0 0 1 1688.5 1415.4" fill="none" stroke="#cccccc" stroke-width="1.9" stroke-linecap="round" stroke-linejoin="round" />
<path d="M1816.5 1406 Q1827.7 1391 1839 1406" fill="none" stroke="#cccccc" stroke-width="2.0" stroke-linecap="round" stroke-linejoin="round" />
<circle cx="1827.7" cy="1407" r="3.6" fill="none" stroke="#cccccc" stroke-width="2.0"/>
<circle cx="1922.4" cy="1405.4" r="13.2" fill="none" stroke="#cccccc" stroke-width="1.9"/>
<ellipse cx="1922.4" cy="1405.4" rx="6" ry="13.2" fill="none" stroke="#cccccc" stroke-width="1.9"/>
<path d="M1909.5 1400.8 H1935.3 M1909.5 1410 H1935.3 M1922.4 1392.2 V1418.6" fill="none" stroke="#cccccc" stroke-width="1.9" stroke-linecap="round" stroke-linejoin="round" />
<path d="M2003.5 1406.5 L2010.5 1413.5 L2023 1401 M2012.5 1408 L2017 1412.7 L2033 1396.8" fill="none" stroke="#cccccc" stroke-width="2.0" stroke-linecap="round" stroke-linejoin="round" />
<path d="M2281.5 1404.5 L2288.8 1411.8 L2307 1393.5" fill="none" stroke="#cccccc" stroke-width="2.0" stroke-linecap="round" stroke-linejoin="round" />
<path d="M2350 1412.5 V1404.5 Q2350 1395.5 2358.5 1394.5 Q2363 1394.3 2365 1397 M2367.5 1403 V1412.5 L2370.5 1414.8 H2346.5 L2350 1412.5 M2355 1415 Q2355 1419.5 2358.5 1419.5 Q2362 1419.5 2362 1415" fill="none" stroke="#cccccc" stroke-width="1.9" stroke-linecap="round" stroke-linejoin="round" />
<circle cx="2366.8" cy="1396.3" r="5.2" fill="#cccccc"/></svg>
</body></html>
